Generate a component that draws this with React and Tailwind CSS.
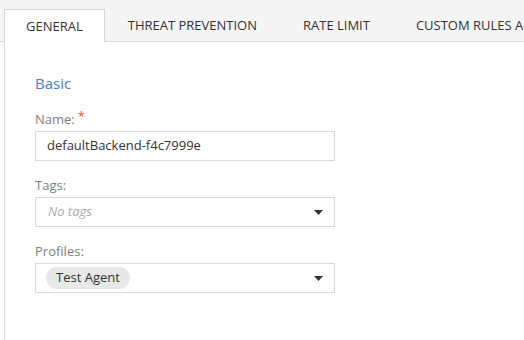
import React from 'react';

const tabs = ['GENERAL', 'THREAT PREVENTION', 'RATE LIMIT', 'CUSTOM RULES AND EXCEPTIONS'];

const Caret = () => (
  <svg width="9" height="5" viewBox="0 0 9 5" className="shrink-0">
    <path d="M0 0h9L4.5 5z" fill="#333" />
  </svg>
);

const Field = ({ label, required, children }) => (
  <div className="flex flex-col">
    <label className="text-[13px] text-[#808080] leading-[18px] mb-[3px]">
      {label}
      {required && <span className="text-[#e5554f] ml-[3px] relative -top-[3px]">*</span>}
    </label>
    {children}
  </div>
);

const App = () => {
  return (
    <div className="w-[524px] h-[340px] overflow-hidden bg-white flex flex-col" style={{ fontFamily: '"Open Sans", sans-serif' }}>
      <div className="h-[42px] bg-[#f5f5f5] border-b border-[#dcdcdc] flex items-end pl-1 shrink-0 whitespace-nowrap">
        {tabs.map((t, i) =>
          i === 0 ? (
            <div key={t} className="h-[33px] -mb-px bg-white border border-b-0 border-[#d6d6d6] px-[21px] flex items-center text-[13px] text-[#333] pt-[1px]">
              {t}
            </div>
          ) : (
            <div key={t} className="h-[32px] px-[23px] flex items-center text-[13px] text-[#333] pt-[1px]">
              {t}
            </div>
          )
        )}
      </div>
      <div className="flex-1 ml-1 border-l border-[#dcdcdc] pl-[30px] pt-[31px]">
        <div className="text-[15px] text-[#4a7dc4] leading-[20px] mb-[17px]">Basic</div>
        <div className="w-[300px] flex flex-col gap-[15px]">
          <Field label="Name:" required>
            <div className="h-[30px] border border-[#d9d9d9] flex items-center px-[11px] text-[13px] text-[#333]">
              defaultBackend-f4c7999e
            </div>
          </Field>
          <Field label="Tags:">
            <div className="h-[30px] border border-[#d9d9d9] flex items-center justify-between pl-[12px] pr-[11px] text-[13px]">
              <span className="italic text-[#aaa]">No tags</span>
              <Caret />
            </div>
          </Field>
          <Field label="Profiles:">
            <div className="h-[30px] border border-[#d9d9d9] flex items-center justify-between pl-[10px] pr-[11px] text-[13px]">
              <span className="h-[22px] px-[10px] rounded-full bg-[#e8e8e8] text-[#333] flex items-center">Test Agent</span>
              <Caret />
            </div>
          </Field>
        </div>
      </div>
    </div>
  );
};

export default App;
